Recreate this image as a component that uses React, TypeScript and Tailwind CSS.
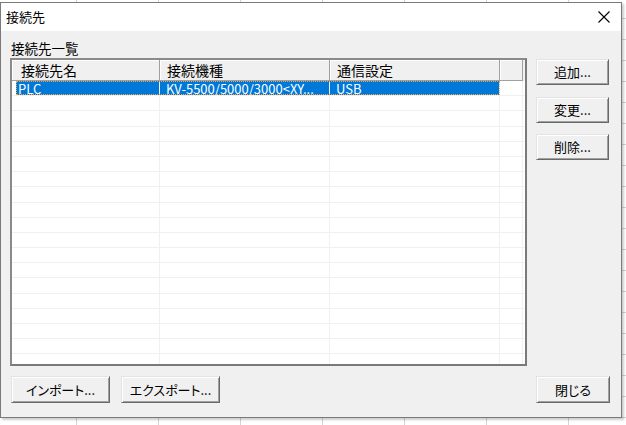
import React from "react";

const JP = "font-['Noto_Sans_CJK_JP','Noto_Sans',sans-serif]";

function Btn({ label, className, palt }: { label: string; className: string; palt?: boolean }) {
  return (
    <div
      className={
        "flex items-center justify-center bg-[#f0f0f0] border border-t-[#e3e3e3] border-l-[#e3e3e3] border-r-[#696969] border-b-[#696969] shadow-[inset_1px_1px_0_#ffffff,inset_-1px_-1px_0_#a0a0a0] text-[13px] leading-[16px] text-black " +
        (palt ? "[font-feature-settings:'palt'] " : "") +
        className
      }
    >
      {label}
    </div>
  );
}

function HeaderCell({ label, className }: { label?: string; className: string }) {
  return (
    <div
      className={
        "h-full flex items-center bg-[#f0f0f0] border-r border-b border-r-[#a0a0a0] border-b-[#a0a0a0] shadow-[inset_1px_1px_0_#ffffff] text-[14px] leading-[14px] text-black " +
        className
      }
    >
      {label}
    </div>
  );
}

export default function App() {
  const emptyRows = Array.from({ length: 18 });
  return (
    <div
      className={
        "w-[626px] h-[425px] overflow-hidden bg-white bg-[linear-gradient(to_right,#d4d4d4_1px,transparent_1px),linear-gradient(to_bottom,#d4d4d4_1px,transparent_1px)] bg-[size:82px_21px] bg-[position:76px_18px] pt-[2px] " +
        JP
      }
    >
      <div className="w-[622px] h-[416px] border border-[#7a7a7a] bg-[#f0f0f0] flex flex-col shadow-[2px_2px_2px_rgba(0,0,0,0.2)]">
        {/* title bar */}
        <div className="h-[28px] bg-white flex items-center shrink-0">
          <div className="pl-[5px] text-[13px] leading-[16px] text-black">接続先</div>
          <div className="ml-auto w-[34px] h-full flex items-center justify-center">
            <svg width="12" height="12" viewBox="0 0 12 12">
              <path d="M0.5 0.5 L11.5 11.5 M11.5 0.5 L0.5 11.5" stroke="#000" strokeWidth="1.1" fill="none" />
            </svg>
          </div>
        </div>

        {/* body */}
        <div className="flex-1 flex flex-col pl-[9px] pr-[12px]">
          <div className="flex">
            <div className="flex flex-col">
              <div className="mt-[9px] h-[16px] leading-[16px] text-[13.5px] pl-[1px] text-black">接続先一覧</div>
              <div className="mt-[2px] w-[517px] h-[308px] border-2 border-t-[#8a8a8a] border-l-[#8a8a8a] border-r-[#7a7a7a] border-b-[#7a7a7a] bg-white overflow-hidden flex flex-col">
                {/* header */}
                <div className="h-[21px] flex shrink-0">
                  <HeaderCell label="接続先名" className="w-[148px] pl-[9px]" />
                  <HeaderCell label="接続機種" className="w-[170px] pl-[7px]" />
                  <HeaderCell label="通信設定" className="w-[170px] pl-[7px]" />
                  <HeaderCell className="w-[23px]" />
                  <div className="flex-1 h-full bg-[#f0f0f0]" />
                </div>
                {/* selected row */}
                <div className="h-[15.2px] flex shrink-0 border-b border-[#f0f0f0]">
                  <div className="flex ml-[4px] bg-[#0078d7] text-white text-[13px] leading-[13px] outline-1 outline-dotted outline-[#f7a14a] -outline-offset-1">
                    <div className="w-[144px] h-full flex items-center pl-[2px] border-r border-[#f0f0f0] whitespace-nowrap">PLC</div>
                    <div className="w-[170px] h-full flex items-center pl-[6px] border-r border-[#f0f0f0] whitespace-nowrap">KV-5500/5000/3000&lt;XY...</div>
                    <div className="w-[170px] h-full flex items-center pl-[6px] border-r border-[#f0f0f0] whitespace-nowrap">USB</div>
                  </div>
                  <div className="w-[23px] h-full border-r border-[#f0f0f0]" />
                </div>
                {emptyRows.map((_, i) => (
                  <div key={i} className="h-[15.2px] flex shrink-0 border-b border-[#f0f0f0]">
                    <div className="w-[148px] h-full border-r border-[#f0f0f0]" />
                    <div className="w-[170px] h-full border-r border-[#f0f0f0]" />
                    <div className="w-[170px] h-full border-r border-[#f0f0f0]" />
                    <div className="w-[23px] h-full border-r border-[#f0f0f0]" />
                  </div>
                ))}
              </div>
            </div>
            <div className="ml-[9px] pt-[28px] flex flex-col">
              <Btn label="追加..." className="w-[73px] h-[26px]" />
              <Btn label="変更..." className="w-[73px] h-[26px] mt-[12px]" />
              <Btn label="削除..." className="w-[73px] h-[26px] mt-[11px]" />
            </div>
          </div>
          <div className="flex mt-[10px]">
            <Btn label="インポート..." palt className="ml-[1px] w-[99px] h-[27px]" />
            <Btn label="エクスポート..." palt className="ml-[11px] w-[99px] h-[27px]" />
            <Btn label="閉じる" palt className="ml-auto mr-[-1px] w-[74px] h-[27px]" />
          </div>
        </div>
      </div>
    </div>
  );
}
